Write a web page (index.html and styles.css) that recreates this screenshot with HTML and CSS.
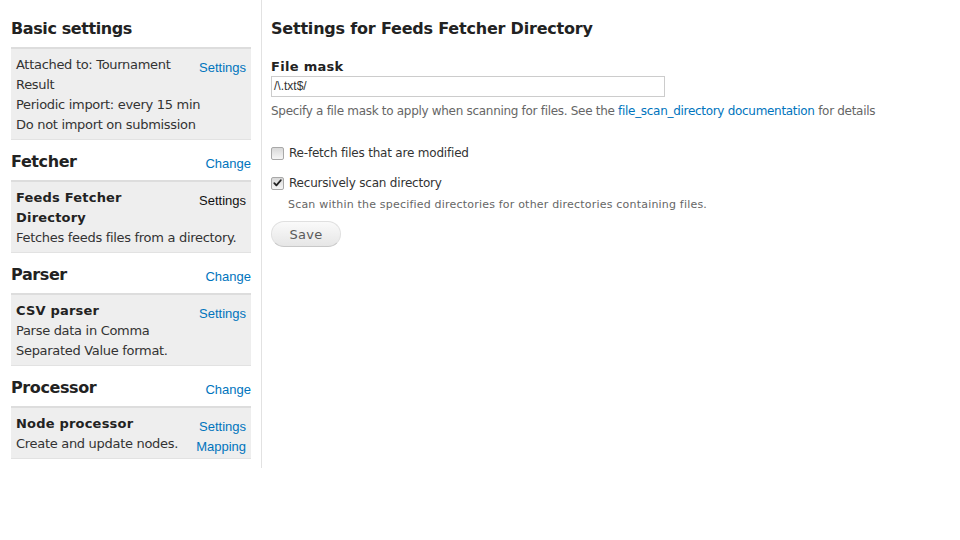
FILE: index.html
```html
<!DOCTYPE html>
<html>
<head>
<meta charset="utf-8">
<link rel="stylesheet" href="styles.css">
</head>
<body>
<div class="page">
  <aside class="sidebar">
    <div class="section-head"><h2>Basic settings</h2></div>
    <div class="plugin">
      <div class="links"><a href="#">Settings</a></div>
      <div class="line">Attached to: Tournament Result</div>
      <div class="line">Periodic import: every 15 min</div>
      <div class="line">Do not import on submission</div>
    </div>

    <div class="section-head"><h2>Fetcher</h2><a href="#" class="change">Change</a></div>
    <div class="plugin">
      <div class="links"><span class="active">Settings</span></div>
      <div class="name">Feeds Fetcher Directory</div>
      <div class="line">Fetches feeds files from a directory.</div>
    </div>

    <div class="section-head"><h2>Parser</h2><a href="#" class="change">Change</a></div>
    <div class="plugin">
      <div class="links"><a href="#">Settings</a></div>
      <div class="name">CSV parser</div>
      <div class="line">Parse data in Comma Separated Value format.</div>
    </div>

    <div class="section-head"><h2>Processor</h2><a href="#" class="change">Change</a></div>
    <div class="plugin">
      <div class="links"><a href="#">Settings</a><a href="#">Mapping</a></div>
      <div class="name">Node processor</div>
      <div class="line">Create and update nodes.</div>
    </div>
  </aside>

  <main class="content">
    <h1>Settings for Feeds Fetcher Directory</h1>
    <div class="field">
      <label class="field-label">File mask</label>
      <div class="text-input">/\.txt$/</div>
      <div class="description">Specify a file mask to apply when scanning for files. See the <a href="#">file_scan_directory documentation</a> for details</div>
    </div>

    <div class="option first">
      <span class="box"></span>
      <span class="option-label">Re-fetch files that are modified</span>
    </div>
    <div class="option">
      <span class="box checked"><svg viewBox="0 0 12 12" width="12" height="12"><path d="M2.5 6.2 L4.8 8.6 L9.6 3" fill="none" stroke="#222" stroke-width="2" stroke-linecap="round" stroke-linejoin="round"/></svg></span>
      <span class="option-label">Recursively scan directory</span>
    </div>
    <div class="option-desc">Scan within the specified directories for other directories containing files.</div>

    <button class="btn">Save</button>
  </main>
</div>
</body>
</html>
```

FILE: styles.css
```css
html, body {
  margin: 0;
  padding: 0;
  background: #fff;
}
body {
  font-family: "DejaVu Sans", Verdana, sans-serif;
  color: #333;
  font-size: 13px;
}
a {
  color: #0074bd;
  text-decoration: none;
}
.page {
  display: flex;
  align-items: flex-start;
}
.sidebar {
  width: 240px;
  padding: 7px 10px 9px 11px;
  border-right: 1px solid #e2e2e2;
}
.section-head {
  display: flex;
  justify-content: space-between;
  align-items: baseline;
  margin: 12px 0 8px;
  height: 20px;
}
.section-head h2 {
  margin: 0;
  font-size: 16px;
  line-height: 20px;
  font-weight: bold;
  color: #222;
  letter-spacing: -0.4px;
}
.change {
  font-family: "Liberation Sans", Arial, sans-serif;
  font-size: 13px;
  position: relative;
  top: 1px;
}
.plugin {
  background: #eee;
  border-top: 2px solid #ddd;
  border-bottom: 1px solid #e2e2e2;
  padding: 6px 5px 4px 5px;
  line-height: 20px;
  letter-spacing: -0.3px;
}
.links {
  float: right;
  margin-left: 18px;
  padding-top: 3px;
  display: flex;
  flex-direction: column;
  align-items: flex-end;
  font-family: "Liberation Sans", Arial, sans-serif;
  font-size: 13px;
  letter-spacing: 0;
}
.links a, .links span {
  line-height: 20px;
}
.links .active {
  color: #111;
}
.name {
  font-weight: bold;
  letter-spacing: 0.2px;
  color: #222;
}
.content {
  flex: 1;
  padding: 19px 0 0 9px;
}
.content h1 {
  margin: 0 0 19px;
  font-size: 16px;
  line-height: 20px;
  font-weight: bold;
  color: #222;
  letter-spacing: -0.2px;
}
.field-label {
  display: block;
  font-weight: bold;
  font-size: 13px;
  line-height: 18px;
  letter-spacing: 0.3px;
  color: #222;
  margin-bottom: 0;
}
.text-input {
  width: 388px;
  height: 19px;
  border: 1px solid #ccc;
  padding: 0 2px;
  font-family: "Liberation Sans", Arial, sans-serif;
  font-size: 12px;
  line-height: 19px;
  color: #333;
}
.description {
  margin-top: 6px;
  font-size: 12px;
  line-height: 16px;
  color: #666;
  letter-spacing: -0.3px;
}
.option {
  display: flex;
  align-items: center;
  height: 16px;
  margin-top: 14px;
}
.option.first {
  margin-top: 26px;
}
.box {
  width: 11px;
  height: 11px;
  border: 1px solid #a8a8a8;
  border-radius: 2px;
  background: linear-gradient(#d8d8d8, #f6f6f6);
  margin-right: 5px;
  display: flex;
  align-items: center;
  justify-content: center;
}
.box svg {
  display: block;
}
.option-label {
  font-size: 12px;
  letter-spacing: -0.2px;
  color: #333;
}
.option-desc {
  margin: 6px 0 0 17px;
  font-size: 11px;
  line-height: 16px;
  color: #666;
  letter-spacing: 0.2px;
}
.btn {
  margin-top: 8px;
  width: 70px;
  height: 26px;
  border: 1px solid #e0e0e0;
  border-bottom-color: #c8c8c8;
  border-radius: 13px;
  background: linear-gradient(#fafafa, #e6e6e6);
  font-family: "DejaVu Sans", Verdana, sans-serif;
  font-size: 13px;
  color: #5a5a5a;
  padding: 0;
  letter-spacing: 0.3px;
}
```
